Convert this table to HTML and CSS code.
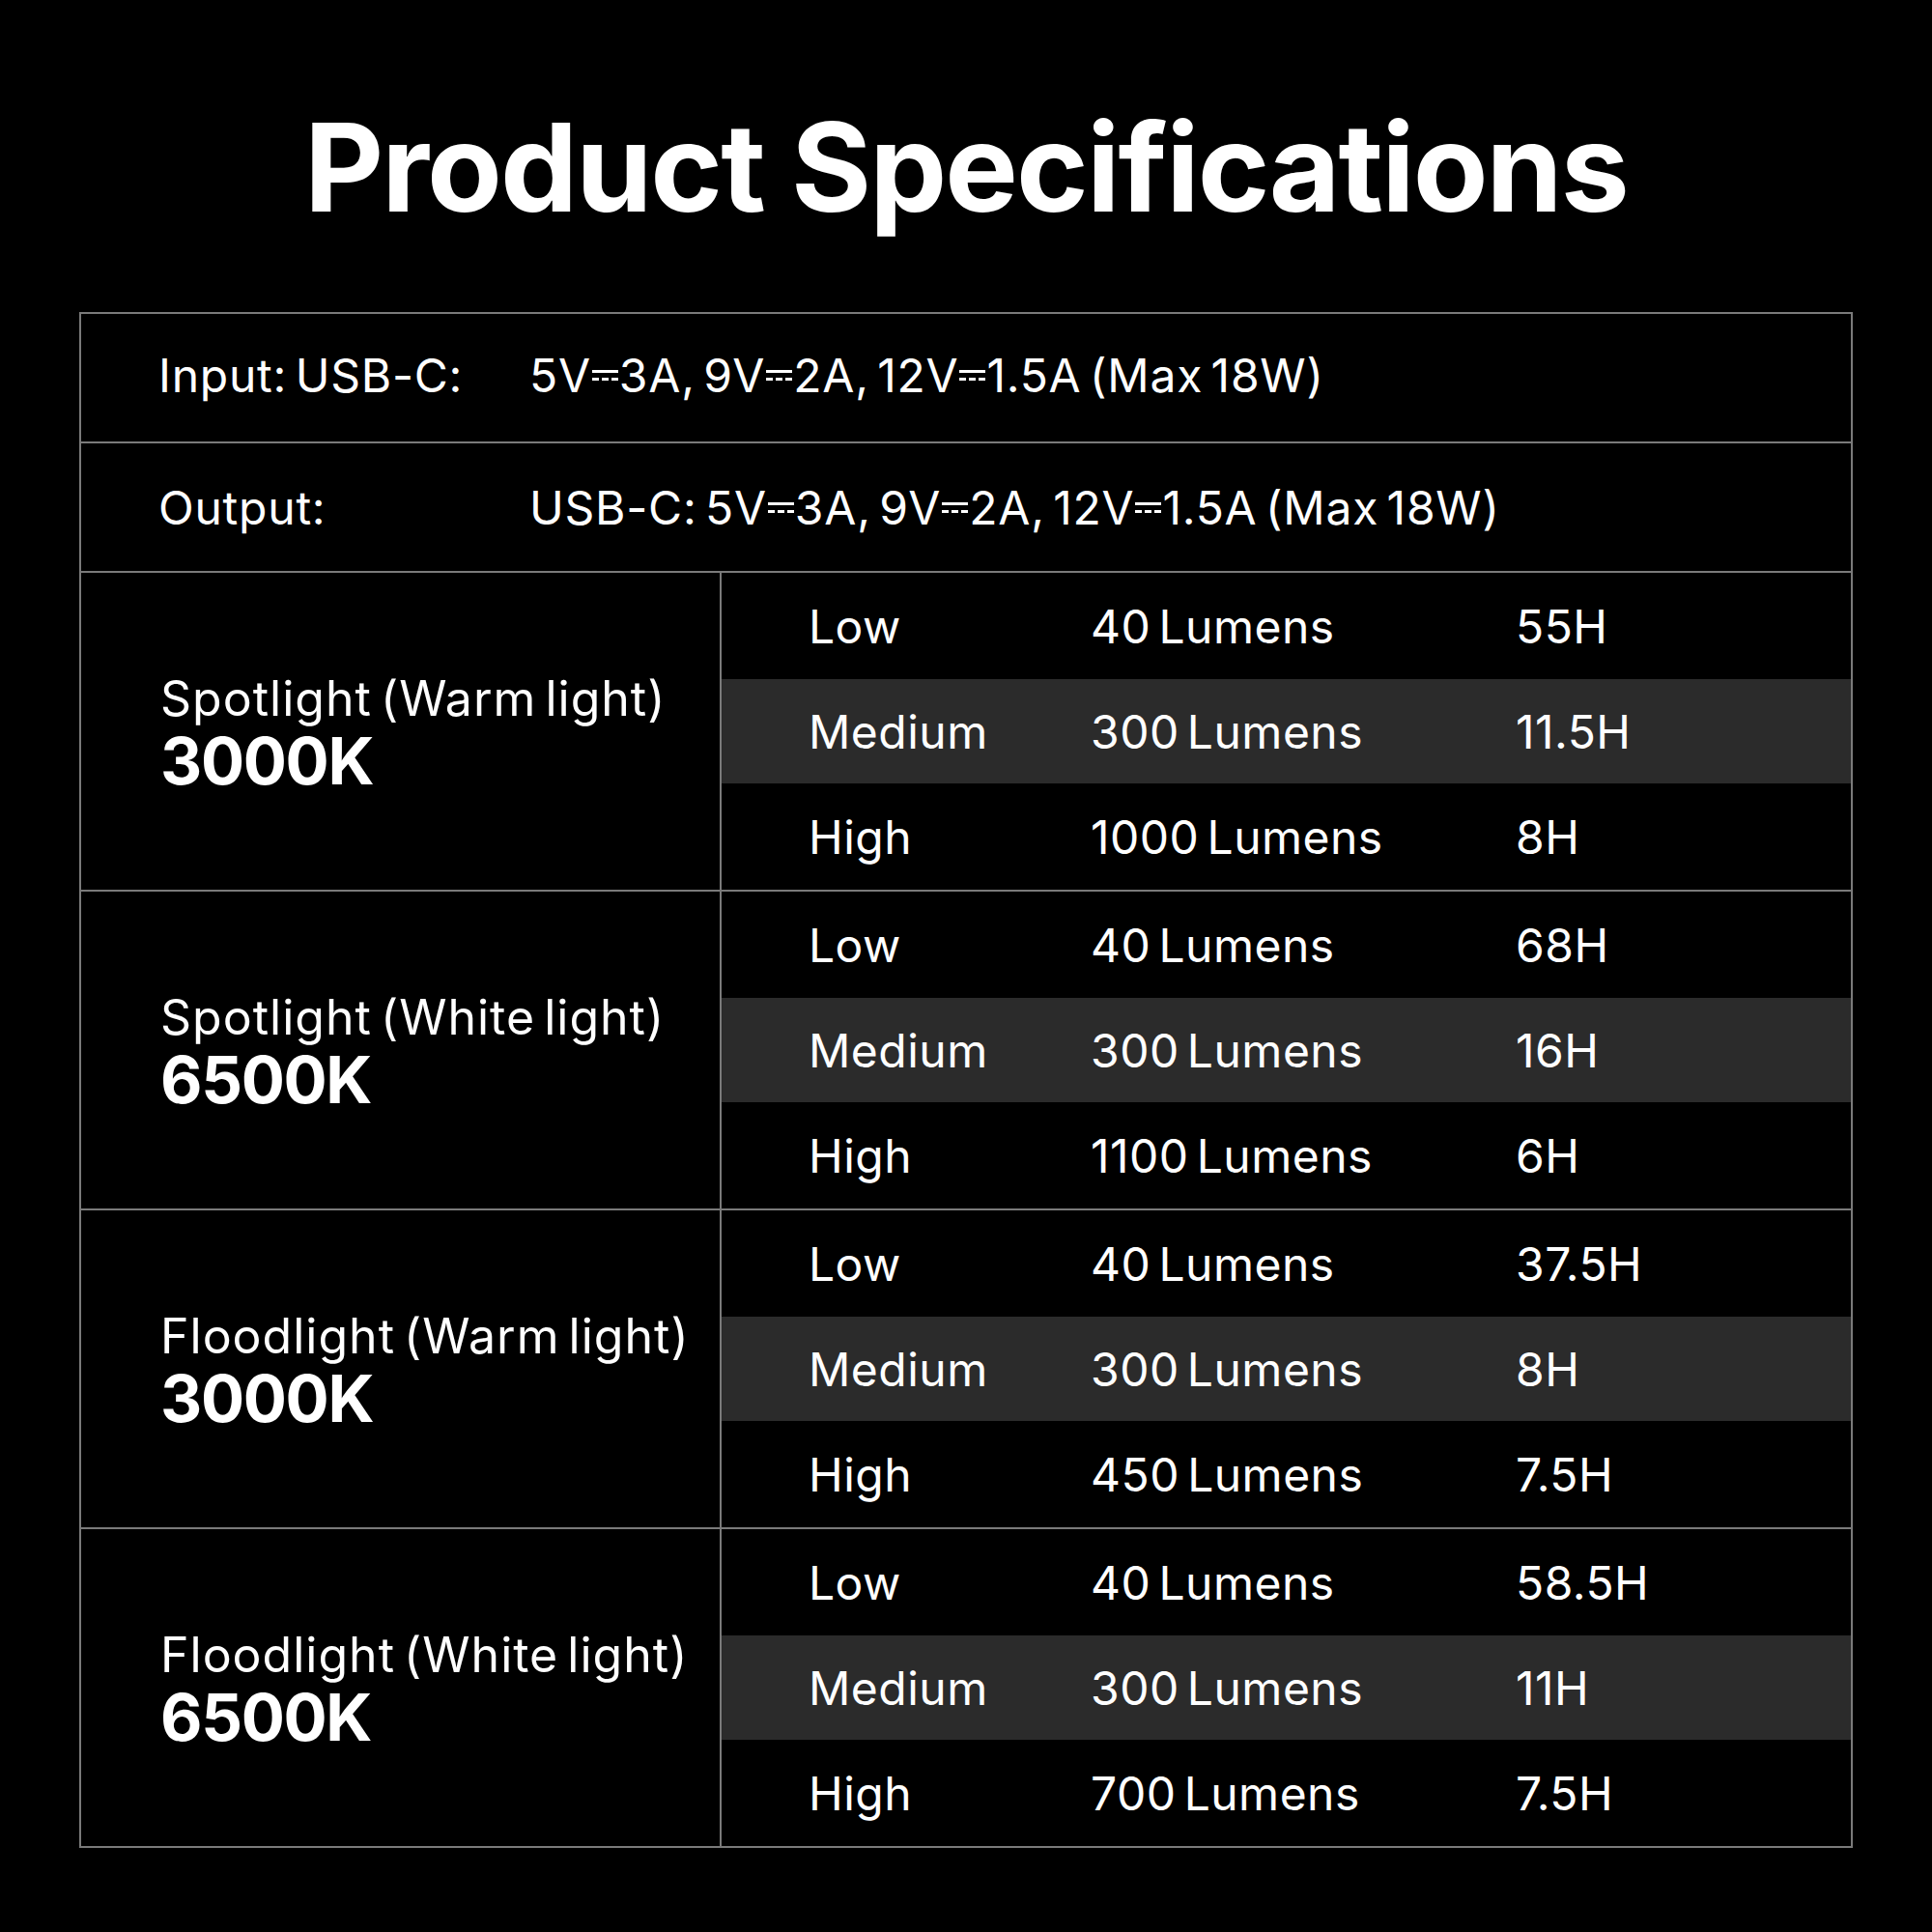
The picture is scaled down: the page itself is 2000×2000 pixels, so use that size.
FILE: index.html
```html
<!DOCTYPE html>
<html lang="en">
<head>
<meta charset="utf-8">
<title>Product Specifications</title>
<link rel="stylesheet" href="styles.css">
</head>
<body>
<main class="page">
  <h1 class="title">Product Specifications</h1>
  <section class="specs">
    <div class="line-row">
      <span class="line-label">Input: USB-C:</span>
      <span class="line-value">5V<svg class="dc" viewBox="0 0 27 11"><rect x="0" y="0" width="27" height="3"/><rect x="0" y="8" width="7" height="3"/><rect x="10" y="8" width="7" height="3"/><rect x="20" y="8" width="7" height="3"/></svg>3A, 9V<svg class="dc" viewBox="0 0 27 11"><rect x="0" y="0" width="27" height="3"/><rect x="0" y="8" width="7" height="3"/><rect x="10" y="8" width="7" height="3"/><rect x="20" y="8" width="7" height="3"/></svg>2A, 12V<svg class="dc" viewBox="0 0 27 11"><rect x="0" y="0" width="27" height="3"/><rect x="0" y="8" width="7" height="3"/><rect x="10" y="8" width="7" height="3"/><rect x="20" y="8" width="7" height="3"/></svg>1.5A (Max 18W)</span>
    </div>
    <div class="line-row">
      <span class="line-label">Output:</span>
      <span class="line-value">USB-C: 5V<svg class="dc" viewBox="0 0 27 11"><rect x="0" y="0" width="27" height="3"/><rect x="0" y="8" width="7" height="3"/><rect x="10" y="8" width="7" height="3"/><rect x="20" y="8" width="7" height="3"/></svg>3A, 9V<svg class="dc" viewBox="0 0 27 11"><rect x="0" y="0" width="27" height="3"/><rect x="0" y="8" width="7" height="3"/><rect x="10" y="8" width="7" height="3"/><rect x="20" y="8" width="7" height="3"/></svg>2A, 12V<svg class="dc" viewBox="0 0 27 11"><rect x="0" y="0" width="27" height="3"/><rect x="0" y="8" width="7" height="3"/><rect x="10" y="8" width="7" height="3"/><rect x="20" y="8" width="7" height="3"/></svg>1.5A (Max 18W)</span>
    </div>

    <div class="group">
      <div class="group-label"><span class="mode">Spotlight (Warm light)</span><span class="kelvin">3000K</span></div>
      <div class="levels">
        <div class="level"><span class="c1">Low</span><span class="c2">40 Lumens</span><span class="c3">55H</span></div>
        <div class="level alt"><span class="c1">Medium</span><span class="c2">300 Lumens</span><span class="c3">11.5H</span></div>
        <div class="level"><span class="c1">High</span><span class="c2">1000 Lumens</span><span class="c3">8H</span></div>
      </div>
    </div>

    <div class="group">
      <div class="group-label"><span class="mode">Spotlight (White light)</span><span class="kelvin">6500K</span></div>
      <div class="levels">
        <div class="level"><span class="c1">Low</span><span class="c2">40 Lumens</span><span class="c3">68H</span></div>
        <div class="level alt"><span class="c1">Medium</span><span class="c2">300 Lumens</span><span class="c3">16H</span></div>
        <div class="level"><span class="c1">High</span><span class="c2">1100 Lumens</span><span class="c3">6H</span></div>
      </div>
    </div>

    <div class="group">
      <div class="group-label"><span class="mode">Floodlight (Warm light)</span><span class="kelvin">3000K</span></div>
      <div class="levels">
        <div class="level"><span class="c1">Low</span><span class="c2">40 Lumens</span><span class="c3">37.5H</span></div>
        <div class="level alt"><span class="c1">Medium</span><span class="c2">300 Lumens</span><span class="c3">8H</span></div>
        <div class="level"><span class="c1">High</span><span class="c2">450 Lumens</span><span class="c3">7.5H</span></div>
      </div>
    </div>

    <div class="group">
      <div class="group-label"><span class="mode">Floodlight (White light)</span><span class="kelvin">6500K</span></div>
      <div class="levels">
        <div class="level"><span class="c1">Low</span><span class="c2">40 Lumens</span><span class="c3">58.5H</span></div>
        <div class="level alt"><span class="c1">Medium</span><span class="c2">300 Lumens</span><span class="c3">11H</span></div>
        <div class="level"><span class="c1">High</span><span class="c2">700 Lumens</span><span class="c3">7.5H</span></div>
      </div>
    </div>
  </section>
</main>
</body>
</html>
```

FILE: styles.css
```css
html, body {
  margin: 0;
  padding: 0;
  background: #000;
}

body {
  width: 2000px;
  height: 2000px;
  color: #fff;
  font-family: Inter, "Noto Sans", "Liberation Sans", sans-serif;
}

.page {
  padding-top: 110px;
  display: flex;
  flex-direction: column;
  align-items: center;
}

.title {
  margin: 0;
  font-size: 127px;
  line-height: 127px;
  font-weight: 700;
  letter-spacing: -0.015em;
  text-align: center;
}

.specs {
  margin-top: 86px;
  width: 1836px;
  box-sizing: border-box;
  border: 2px solid #7a7a7a;
}

.line-row {
  height: 134px;
  display: flex;
  align-items: center;
  border-bottom: 2px solid #7a7a7a;
  font-size: 48px;
  letter-spacing: 0.016em;
  word-spacing: -0.12em;
  box-sizing: border-box;
}

.line-row:first-child {
  padding-bottom: 6px;
}

.line-label {
  width: 464px;
  padding-left: 80px;
  box-sizing: border-box;
  white-space: nowrap;
}

.line-value {
  white-space: nowrap;
}

.dc {
  width: 27px;
  height: 11px;
  fill: #fff;
  vertical-align: 12px;
  margin: 0 1px;
}

.group {
  display: grid;
  grid-template-columns: 663px 1fr;
  border-bottom: 2px solid #7a7a7a;
}

.group:last-child {
  border-bottom: none;
}

.group-label {
  border-right: 2px solid #7a7a7a;
  display: flex;
  flex-direction: column;
  justify-content: center;
  padding-left: 82px;
  padding-top: 4px;
}

.mode {
  font-size: 50px;
  line-height: 58px;
  letter-spacing: 0.02em;
  word-spacing: -0.12em;
  white-space: nowrap;
}

.kelvin {
  font-size: 67px;
  line-height: 72px;
  font-weight: 700;
  letter-spacing: -0.02em;
}

.levels {
  display: flex;
  flex-direction: column;
}

.level {
  height: 110px;
  display: grid;
  grid-template-columns: 292px 440px 1fr;
  align-items: center;
  padding-left: 90px;
  font-size: 48px;
  letter-spacing: 0.01em;
  word-spacing: -0.12em;
  white-space: nowrap;
}

.level.alt {
  height: 108px;
  background: #2b2b2b;
}
```
